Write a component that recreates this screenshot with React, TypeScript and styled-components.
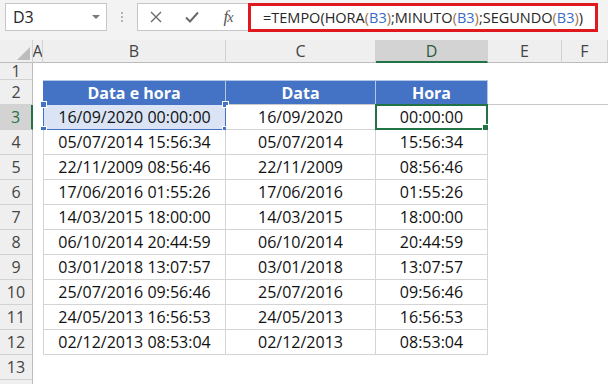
import React from "react";
import styled, { createGlobalStyle, css } from "styled-components";

const GlobalStyle = createGlobalStyle`
  html, body {
    margin: 0;
    padding: 0;
    background: #ffffff;
  }
  body {
    font-family: "Open Sans", "Liberation Sans", sans-serif;
  }
`;

const green = "#217346";
const refBlue = "#4472c4";

const Page = styled.div`
  width: 608px;
  height: 384px;
  overflow: hidden;
  background: #ffffff;
  display: flex;
  flex-direction: column;
`;

const Toolbar = styled.div`
  flex: none;
  height: 40px;
  box-sizing: border-box;
  padding: 3px 10px 0 5px;
  display: flex;
  align-items: flex-start;
  background: #f3f3f3;
`;

const NameBox = styled.div`
  width: 102px;
  height: 28px;
  box-sizing: border-box;
  padding: 0 6px 0 7px;
  display: flex;
  align-items: center;
  justify-content: space-between;
  border: 1px solid #c6c6c6;
  background: #ffffff;
  font-size: 16px;
  color: #262626;
`;

const Caret = styled.span`
  width: 0;
  height: 0;
  border-left: 4px solid transparent;
  border-right: 4px solid transparent;
  border-top: 4px solid #7a7a7a;
`;

const Grip = styled.div`
  width: 30px;
  height: 28px;
  display: flex;
  flex-direction: column;
  align-items: center;
  justify-content: center;
  gap: 2px;
`;

const GripDot = styled.span`
  width: 2px;
  height: 2px;
  background: #b4b4b4;
`;

const ActionBox = styled.div`
  width: 111px;
  height: 28px;
  box-sizing: border-box;
  padding-left: 8px;
  display: flex;
  align-items: center;
  gap: 16px;
  border: 1px solid #c6c6c6;
  border-right: none;
  background: #ffffff;
`;

const ActionIcon = styled.span`
  width: 20px;
  height: 20px;
  display: flex;
  align-items: center;
  justify-content: center;
  color: #6a6a6a;
`;

const FxText = styled.span`
  font-family: "Liberation Serif", serif;
  font-style: italic;
  font-size: 17px;
  color: #555555;
  letter-spacing: -1px;

  small {
    font-size: 14px;
  }
`;

const FormulaField = styled.div`
  flex: 1;
  height: 29px;
  box-sizing: border-box;
  padding-left: 12px;
  display: flex;
  align-items: center;
  border: 3px solid #e0191f;
  background: #ffffff;
  font-size: 14.5px;
  color: #262626;
  white-space: nowrap;
`;

const Token = styled.span<{ $tone?: "ref" | "paren" }>`
  color: ${(p) =>
    p.$tone === "ref" ? "#3a6bc4" : p.$tone === "paren" ? "#a0724a" : "inherit"};
`;

const Sheet = styled.div`
  flex: none;
  display: grid;
  grid-template-columns: 33px 10px 183px 150px 112px 74px 1fr;
  grid-template-rows: 23px 17px repeat(13, 25px);
`;

const ColHead = styled.div<{ $selected?: boolean }>`
  position: relative;
  box-sizing: border-box;
  display: flex;
  align-items: center;
  justify-content: center;
  overflow: hidden;
  background: ${(p) => (p.$selected ? "#d3d3d3" : "#efefef")};
  border-right: 1px solid #d2d2d2;
  border-bottom: ${(p) => (p.$selected ? `2px solid ${green}` : "1px solid #bcbcbc")};
  font-size: 16px;
  color: ${(p) => (p.$selected ? "#2c5a40" : "#444444")};
`;

const Corner = styled(ColHead)`
  justify-content: flex-end;
  align-items: flex-end;
  padding: 0 2px 2px 0;
`;

const RowHead = styled.div<{ $selected?: boolean }>`
  box-sizing: border-box;
  display: flex;
  align-items: center;
  justify-content: center;
  background: ${(p) => (p.$selected ? "#d3d3d3" : "#efefef")};
  border-right: ${(p) => (p.$selected ? `2px solid ${green}` : "1px solid #bcbcbc")};
  border-bottom: 1px solid #d2d2d2;
  font-size: 16px;
  color: ${(p) => (p.$selected ? green : "#444444")};
`;

type CellKind = "blank" | "head" | "data";

const Cell = styled.div<{
  $kind: CellKind;
  $first?: boolean;
  $rule?: boolean;
  $refd?: boolean;
}>`
  position: relative;
  box-sizing: border-box;
  display: flex;
  align-items: center;
  justify-content: center;
  font-size: 16px;
  white-space: nowrap;
  color: #111111;
  background: #ffffff;

  ${(p) =>
    p.$kind === "head" &&
    css`
      background: #4472c4;
      color: #ffffff;
      font-weight: 700;
      border-top: 1px solid #b4c6e7;
      border-right: 1px solid #b4c6e7;
      border-bottom: 1px solid #c9c9c9;
    `}

  ${(p) =>
    p.$kind === "data" &&
    css`
      border-right: 1px solid #d4d4d4;
      border-bottom: 1px solid #d4d4d4;
    `}

  ${(p) =>
    p.$first &&
    css`
      border-left: 1px solid #d4d4d4;
    `}

  ${(p) =>
    p.$rule &&
    css`
      border-bottom: 1px solid #c9c9c9;
    `}

  ${(p) =>
    p.$refd &&
    css`
      background: #dae4f4;
    `}
`;

const RefFrame = styled.div`
  position: absolute;
  inset: -1px -1px -1px -1px;
  border: 1.5px solid ${refBlue};
  pointer-events: none;
`;

const RefHandle = styled.span<{ $x: "l" | "r"; $y: "t" | "b" }>`
  position: absolute;
  width: 5px;
  height: 5px;
  background: ${refBlue};
  border: 1px solid #ffffff;
  ${(p) => (p.$x === "l" ? "left: -4px;" : "right: -4px;")}
  ${(p) => (p.$y === "t" ? "top: -4px;" : "bottom: -4px;")}
`;

const ActiveFrame = styled.div`
  position: absolute;
  inset: -1px -1px -1px -1px;
  border: 2px solid ${green};
  pointer-events: none;
`;

const FillHandle = styled.span`
  position: absolute;
  right: -4px;
  bottom: -4px;
  width: 6px;
  height: 6px;
  background: ${green};
  border: 1px solid #ffffff;
`;

const columns = ["A", "B", "C", "D", "E", "F"];

const records = [
  ["16/09/2020", "00:00:00"],
  ["05/07/2014", "15:56:34"],
  ["22/11/2009", "08:56:46"],
  ["17/06/2016", "01:55:26"],
  ["14/03/2015", "18:00:00"],
  ["06/10/2014", "20:44:59"],
  ["03/01/2018", "13:07:57"],
  ["25/07/2016", "09:56:46"],
  ["24/05/2013", "16:56:53"],
  ["02/12/2013", "08:53:04"],
];

function FormulaText() {
  const ref = (
    <>
      <Token $tone="paren">(</Token>
      <Token $tone="ref">B3</Token>
      <Token $tone="paren">)</Token>
    </>
  );
  return (
    <FormulaField>
      =TEMPO(HORA{ref};MINUTO{ref};SEGUNDO{ref})
    </FormulaField>
  );
}

function FormulaBar() {
  return (
    <Toolbar>
      <NameBox>
        D3
        <Caret />
      </NameBox>
      <Grip>
        <GripDot />
        <GripDot />
        <GripDot />
      </Grip>
      <ActionBox>
        <ActionIcon>
          <svg width="12" height="12" viewBox="0 0 12 12">
            <path d="M1 1 L11 11 M11 1 L1 11" stroke="currentColor" strokeWidth="1.4" />
          </svg>
        </ActionIcon>
        <ActionIcon>
          <svg width="14" height="12" viewBox="0 0 14 12">
            <path
              d="M1 6.5 L5 10.5 L13 1.5"
              stroke="currentColor"
              strokeWidth="2"
              fill="none"
            />
          </svg>
        </ActionIcon>
        <ActionIcon>
          <FxText>
            f<small>x</small>
          </FxText>
        </ActionIcon>
      </ActionBox>
      <FormulaText />
    </Toolbar>
  );
}

function BlankRow({ n }: { n?: number }) {
  return (
    <>
      <RowHead>{n}</RowHead>
      {columns.map((c) => (
        <Cell key={c} $kind="blank" />
      ))}
    </>
  );
}

function HeaderRow() {
  return (
    <>
      <RowHead>2</RowHead>
      <Cell $kind="blank" />
      <Cell $kind="head">Data e hora</Cell>
      <Cell $kind="head">Data</Cell>
      <Cell $kind="head">Hora</Cell>
      <Cell $kind="blank" $rule />
      <Cell $kind="blank" $rule />
    </>
  );
}

function DataRow({ n, date, time }: { n: number; date: string; time: string }) {
  const current = n === 3;
  return (
    <>
      <RowHead $selected={current}>{n}</RowHead>
      <Cell $kind="blank" />
      <Cell $kind="data" $first $refd={current}>
        {date} {time}
        {current && (
          <RefFrame>
            <RefHandle $x="l" $y="t" />
            <RefHandle $x="r" $y="t" />
            <RefHandle $x="l" $y="b" />
            <RefHandle $x="r" $y="b" />
          </RefFrame>
        )}
      </Cell>
      <Cell $kind="data">{date}</Cell>
      <Cell $kind="data">
        {time}
        {current && (
          <ActiveFrame>
            <FillHandle />
          </ActiveFrame>
        )}
      </Cell>
      <Cell $kind="blank" />
      <Cell $kind="blank" />
    </>
  );
}

function Worksheet() {
  return (
    <Sheet>
      <Corner>
        <svg width="13" height="13" viewBox="0 0 13 13">
          <polygon points="13,0 13,13 0,13" fill="#bdbdbd" />
        </svg>
      </Corner>
      {columns.map((c) => (
        <ColHead key={c} $selected={c === "D"}>
          {c}
        </ColHead>
      ))}
      <BlankRow n={1} />
      <HeaderRow />
      {records.map(([date, time], i) => (
        <DataRow key={i} n={i + 3} date={date} time={time} />
      ))}
      <BlankRow n={13} />
      <BlankRow />
    </Sheet>
  );
}

export default function App() {
  return (
    <>
      <GlobalStyle />
      <Page>
        <FormulaBar />
        <Worksheet />
      </Page>
    </>
  );
}
